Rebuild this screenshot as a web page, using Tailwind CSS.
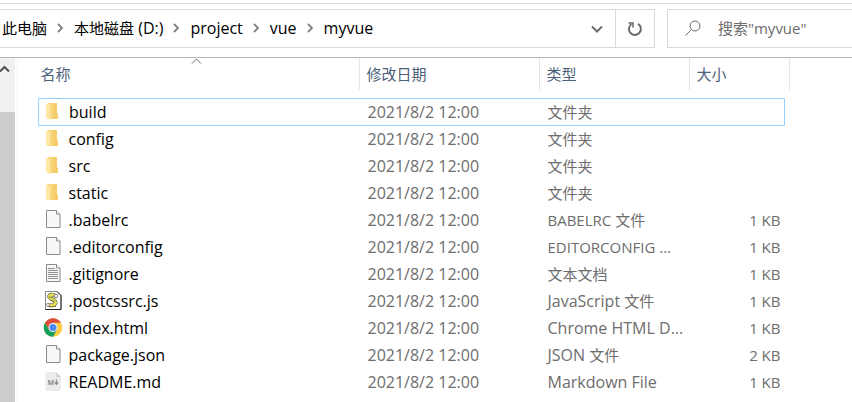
<!DOCTYPE html>
<html lang="zh-CN">
<head>
  <meta charset="UTF-8">
  <meta name="viewport" content="width=device-width, initial-scale=1.0">
  <title>myvue</title>
  <script src="https://cdn.jsdelivr.net/npm/@tailwindcss/browser@4"></script>
</head>
<body class="h-screen flex flex-col overflow-hidden bg-white text-black font-['Open_Sans','Noto_Sans_CJK_SC',sans-serif] text-[16px] leading-5">
  <!-- Icons -->
  <svg class="hidden">
    <symbol id="i-folder" viewBox="0 0 20 20">
      <path d="M5 1h9v10l1 1v5H5z" fill="#f9d87d"/>
      <path d="M10 1h4v10l1 1v5H10z" fill="#f5cd6a"/>
      <path d="M3 1l4 2.500v13L5.500 18 3 15.500z" fill="#ffe8a6"/>
    </symbol>
    <symbol id="i-file" viewBox="0 0 20 20">
      <path d="M3.500.500h10l3.500 3.500v13.500H3.500z" fill="#f8f8f8" stroke="#8a8a8a"/>
      <path d="M13.500.500v3.500H17" fill="#fff" stroke="#8a8a8a"/>
    </symbol>
    <symbol id="i-text" viewBox="0 0 20 20">
      <use href="#i-file"/>
      <path d="M5 4.500h7M5 6.500h10M5 8.500h10M5 10.500h10M5 12.500h10M5 14.500h10" stroke="#8f8f8f"/>
    </symbol>
    <symbol id="i-js" viewBox="0 0 20 20">
      <path d="M2.500.500h11.500l4 4v14H2.500z" fill="#fff" stroke="#8a8a8a"/>
      <path d="M14 .500l4 4v14H2.500" fill="none" stroke="#222"/>
      <path d="M12.500 5C10 3 6 3.500 6.200 6c.300 2.300 6.300 2.500 6.300 5.500 0 2.800-4.500 3.300-7.500 2.300" fill="none" stroke="#6b6a4a" stroke-width="4"/>
      <path d="M12.500 5C10 3 6 3.500 6.200 6c.300 2.300 6.300 2.500 6.300 5.500 0 2.800-4.500 3.300-7.500 2.300" fill="none" stroke="#e3dd55" stroke-width="2.800"/>
      <path d="M5.500 6l3 1M8 9l4 1.500M5 15.500h8" stroke="#77752e" stroke-width=".800"/>
      <circle cx="13" cy="5" r="1.800" fill="#fff" stroke="#555" stroke-width=".800"/>
      <circle cx="5" cy="13.800" r="1.500" fill="#fff" stroke="#777" stroke-width=".800"/>
    </symbol>
    <symbol id="i-chrome" viewBox="0 0 20 20">
      <circle cx="10" cy="9.500" r="9.300" fill="#ffcd40"/>
      <path d="M10 4.850h8.050A9.300 9.300 0 0 0 1.950 4.850l4.100 7z" fill="#dd4b3e"/>
      <path d="M1.950 4.850A9.300 9.300 0 0 0 10 18.800l4-7-4 2-4-2z" fill="#159f5c"/>
      <circle cx="10" cy="9.500" r="4.500" fill="#f4f4f4"/>
      <circle cx="10" cy="9.500" r="3.500" fill="#4a8af4"/>
    </symbol>
    <symbol id="i-md" viewBox="0 0 20 20">
      <path d="M4 0h9l5 5v12.500a1.500 1.500 0 0 1-1.500 1.500H4a1.500 1.500 0 0 1-1.500-1.500v-16A1.500 1.500 0 0 1 4 0z" fill="#ececec"/>
      <path d="M13 0l5 5h-5z" fill="#d2d2d2"/>
      <text x="4.500" y="12.500" font-size="7" font-weight="700" fill="#8c8c8c">M</text>
      <path d="M13.500 7.500v4.500M11.800 10.300l1.700 2 1.700-2" fill="none" stroke="#8c8c8c" stroke-width="1.300"/>
    </symbol>
    <symbol id="i-next" viewBox="0 0 8 10">
      <path d="M2 1l4 4-4 4" fill="none" stroke="#808080" stroke-width="1.800"/>
    </symbol>
  </svg>

  <!-- Address bar and search -->
  <header class="shrink-0 flex mt-[3px] pt-[5px] pb-[9px] border-t border-b border-t-[#d9d9d9] border-b-[#b8b8b8]">
    <div class="flex-1 flex h-[39px] border border-l-0 border-[#d9d9d9]">
      <nav class="flex-1 flex items-center pl-0.5 pb-0.5">
        <a href="#" class="text-[15px]">此电脑</a>
        <svg class="w-2 h-2.5 ml-[9px] mr-[10px]"><use href="#i-next"/></svg>
        <a href="#"><span class="text-[15px]">本地磁盘</span> (D:)</a>
        <svg class="w-2 h-2.5 ml-[9px] mr-[10px]"><use href="#i-next"/></svg>
        <a href="#">project</a>
        <svg class="w-2 h-2.5 ml-[9px] mr-[10px]"><use href="#i-next"/></svg>
        <a href="#">vue</a>
        <svg class="w-2 h-2.5 ml-[9px] mr-[10px]"><use href="#i-next"/></svg>
        <a href="#">myvue</a>
      </nav>
      <button class="w-9 flex items-center justify-center" aria-label="以前的位置">
        <svg class="w-3 h-2" viewBox="0 0 12 8"><path d="M1 1.500l5 5 5-5" fill="none" stroke="#6b6b6b" stroke-width="2"/></svg>
      </button>
      <button class="w-[39px] flex items-center justify-center border-l border-[#d9d9d9]" aria-label="刷新">
        <svg class="w-4 h-4" viewBox="0 0 16 16" fill="none" stroke="#6b6b6b" stroke-width="2">
          <path d="M11 2.800a6 6 0 1 1-6.500 .200"/>
          <path d="M1.500 2h4.500v4.500" stroke-width="1.600"/>
        </svg>
      </button>
    </div>
    <label class="w-[185px] ml-3 flex items-center h-[39px] pl-[17px] pb-0.5 border border-r-0 border-[#d9d9d9]">
      <svg class="w-4 h-4 shrink-0" viewBox="0 0 16 16" fill="none" stroke="#6d6d6d">
        <circle cx="10" cy="6" r="5"/>
        <path d="M6.500 9.500L.500 15.500"/>
      </svg>
      <input type="text" aria-label="搜索" placeholder='搜索"myvue"' class="flex-1 min-w-0 ml-[17px] text-[15px] outline-none placeholder:text-[#6d6d6d]">
    </label>
  </header>

  <main class="flex-1 min-h-0 flex">
    <!-- Scrollbar of the navigation pane -->
    <div class="w-[15px] shrink-0 flex flex-col bg-[#f0f0f0]">
      <svg class="w-[10px] h-[54px] shrink-0" viewBox="0 0 10 54"><path d="M0 13.500l4.500-4.500 4.500 4.500" fill="none" stroke="#505050" stroke-width="2"/></svg>
      <div class="flex-1 bg-[#cdcdcd]"></div>
    </div>
    <div class="flex-1 ml-0.5 pl-5 border-l border-[#f3f3f3]">
      <table class="table-fixed w-[751px] text-left">
        <colgroup>
          <col class="w-[321px]"><col class="w-[180px]"><col class="w-[150px]"><col class="w-[95px]"><col class="w-[5px]">
        </colgroup>
        <thead class="text-[15px] text-[#4c607a]">
          <tr>
            <th class="p-0 pb-2 font-normal relative">
              <div class="h-8 flex items-center pl-0.5 border-r border-[#e5e5e5]">名称</div>
              <svg class="absolute top-0 left-[152px] w-[11px] h-[6px]" viewBox="0 0 11 6"><path d="M1 5.500l4.500-4.500 4.500 4.500" fill="none" stroke="#6d6d6d"/></svg>
            </th>
            <th class="p-0 pb-2 font-normal"><div class="h-8 flex items-center pl-[7px] border-r border-[#e5e5e5]">修改日期</div></th>
            <th class="p-0 pb-2 font-normal"><div class="h-8 flex items-center pl-[7px] border-r border-[#e5e5e5]">类型</div></th>
            <th class="p-0 pb-2 font-normal"><div class="h-8 flex items-center pl-[7px]">大小</div></th>
            <th class="p-0 pb-2"><div class="h-8 border-r border-[#e5e5e5]"></div></th>
          </tr>
        </thead>
        <tbody class="text-[#6d6d6d]">
          <tr class="h-[27px]">
            <td class="text-black border-y border-l border-[#99d1ff]"><div class="flex items-center gap-1.5 pl-1"><svg class="w-5 h-5"><use href="#i-folder"/></svg>build</div></td>
            <td class="pl-2 border-y border-[#99d1ff]">2021/8/2 12:00</td>
            <td class="pl-2 text-[15px] border-y border-[#99d1ff]">文件夹</td>
            <td class="border-y border-r border-[#99d1ff]"></td>
          </tr>
          <tr class="h-[27px]">
            <td class="text-black"><div class="flex items-center gap-1.5 pl-1"><svg class="w-5 h-5"><use href="#i-folder"/></svg>config</div></td>
            <td class="pl-2">2021/8/2 12:00</td>
            <td class="pl-2 text-[15px]">文件夹</td>
            <td></td>
          </tr>
          <tr class="h-[27px]">
            <td class="text-black"><div class="flex items-center gap-1.5 pl-1"><svg class="w-5 h-5"><use href="#i-folder"/></svg>src</div></td>
            <td class="pl-2">2021/8/2 12:00</td>
            <td class="pl-2 text-[15px]">文件夹</td>
            <td></td>
          </tr>
          <tr class="h-[27px]">
            <td class="text-black"><div class="flex items-center gap-1.5 pl-1"><svg class="w-5 h-5"><use href="#i-folder"/></svg>static</div></td>
            <td class="pl-2">2021/8/2 12:00</td>
            <td class="pl-2 text-[15px]">文件夹</td>
            <td></td>
          </tr>
          <tr class="h-[27px]">
            <td class="text-black"><div class="flex items-center gap-1.5 pl-1"><svg class="w-5 h-5"><use href="#i-file"/></svg>.babelrc</div></td>
            <td class="pl-2">2021/8/2 12:00</td>
            <td class="pl-2 text-[15px]">BABELRC 文件</td>
            <td class="pr-1 text-right text-[15px]">1 KB</td>
          </tr>
          <tr class="h-[27px]">
            <td class="text-black"><div class="flex items-center gap-1.5 pl-1"><svg class="w-5 h-5"><use href="#i-file"/></svg>.editorconfig</div></td>
            <td class="pl-2">2021/8/2 12:00</td>
            <td class="pl-2 text-[15px]">EDITORCONFIG ...</td>
            <td class="pr-1 text-right text-[15px]">1 KB</td>
          </tr>
          <tr class="h-[27px]">
            <td class="text-black"><div class="flex items-center gap-1.5 pl-1"><svg class="w-5 h-5"><use href="#i-text"/></svg>.gitignore</div></td>
            <td class="pl-2">2021/8/2 12:00</td>
            <td class="pl-2 text-[15px]">文本文档</td>
            <td class="pr-1 text-right text-[15px]">1 KB</td>
          </tr>
          <tr class="h-[27px]">
            <td class="text-black"><div class="flex items-center gap-1.5 pl-1"><svg class="w-5 h-5"><use href="#i-js"/></svg>.postcssrc.js</div></td>
            <td class="pl-2">2021/8/2 12:00</td>
            <td class="pl-2">JavaScript <span class="text-[15px]">文件</span></td>
            <td class="pr-1 text-right text-[15px]">1 KB</td>
          </tr>
          <tr class="h-[27px]">
            <td class="text-black"><div class="flex items-center gap-1.5 pl-1"><svg class="w-5 h-5"><use href="#i-chrome"/></svg>index.html</div></td>
            <td class="pl-2">2021/8/2 12:00</td>
            <td class="pl-2">Chrome HTML D...</td>
            <td class="pr-1 text-right text-[15px]">1 KB</td>
          </tr>
          <tr class="h-[27px]">
            <td class="text-black"><div class="flex items-center gap-1.5 pl-1"><svg class="w-5 h-5"><use href="#i-file"/></svg>package.json</div></td>
            <td class="pl-2">2021/8/2 12:00</td>
            <td class="pl-2">JSON <span class="text-[15px]">文件</span></td>
            <td class="pr-1 text-right text-[15px]">2 KB</td>
          </tr>
          <tr class="h-[27px]">
            <td class="text-black"><div class="flex items-center gap-1.5 pl-1"><svg class="w-5 h-5"><use href="#i-md"/></svg>README.md</div></td>
            <td class="pl-2">2021/8/2 12:00</td>
            <td class="pl-2">Markdown File</td>
            <td class="pr-1 text-right text-[15px]">1 KB</td>
          </tr>
        </tbody>
      </table>
    </div>
  </main>
</body>
</html>
